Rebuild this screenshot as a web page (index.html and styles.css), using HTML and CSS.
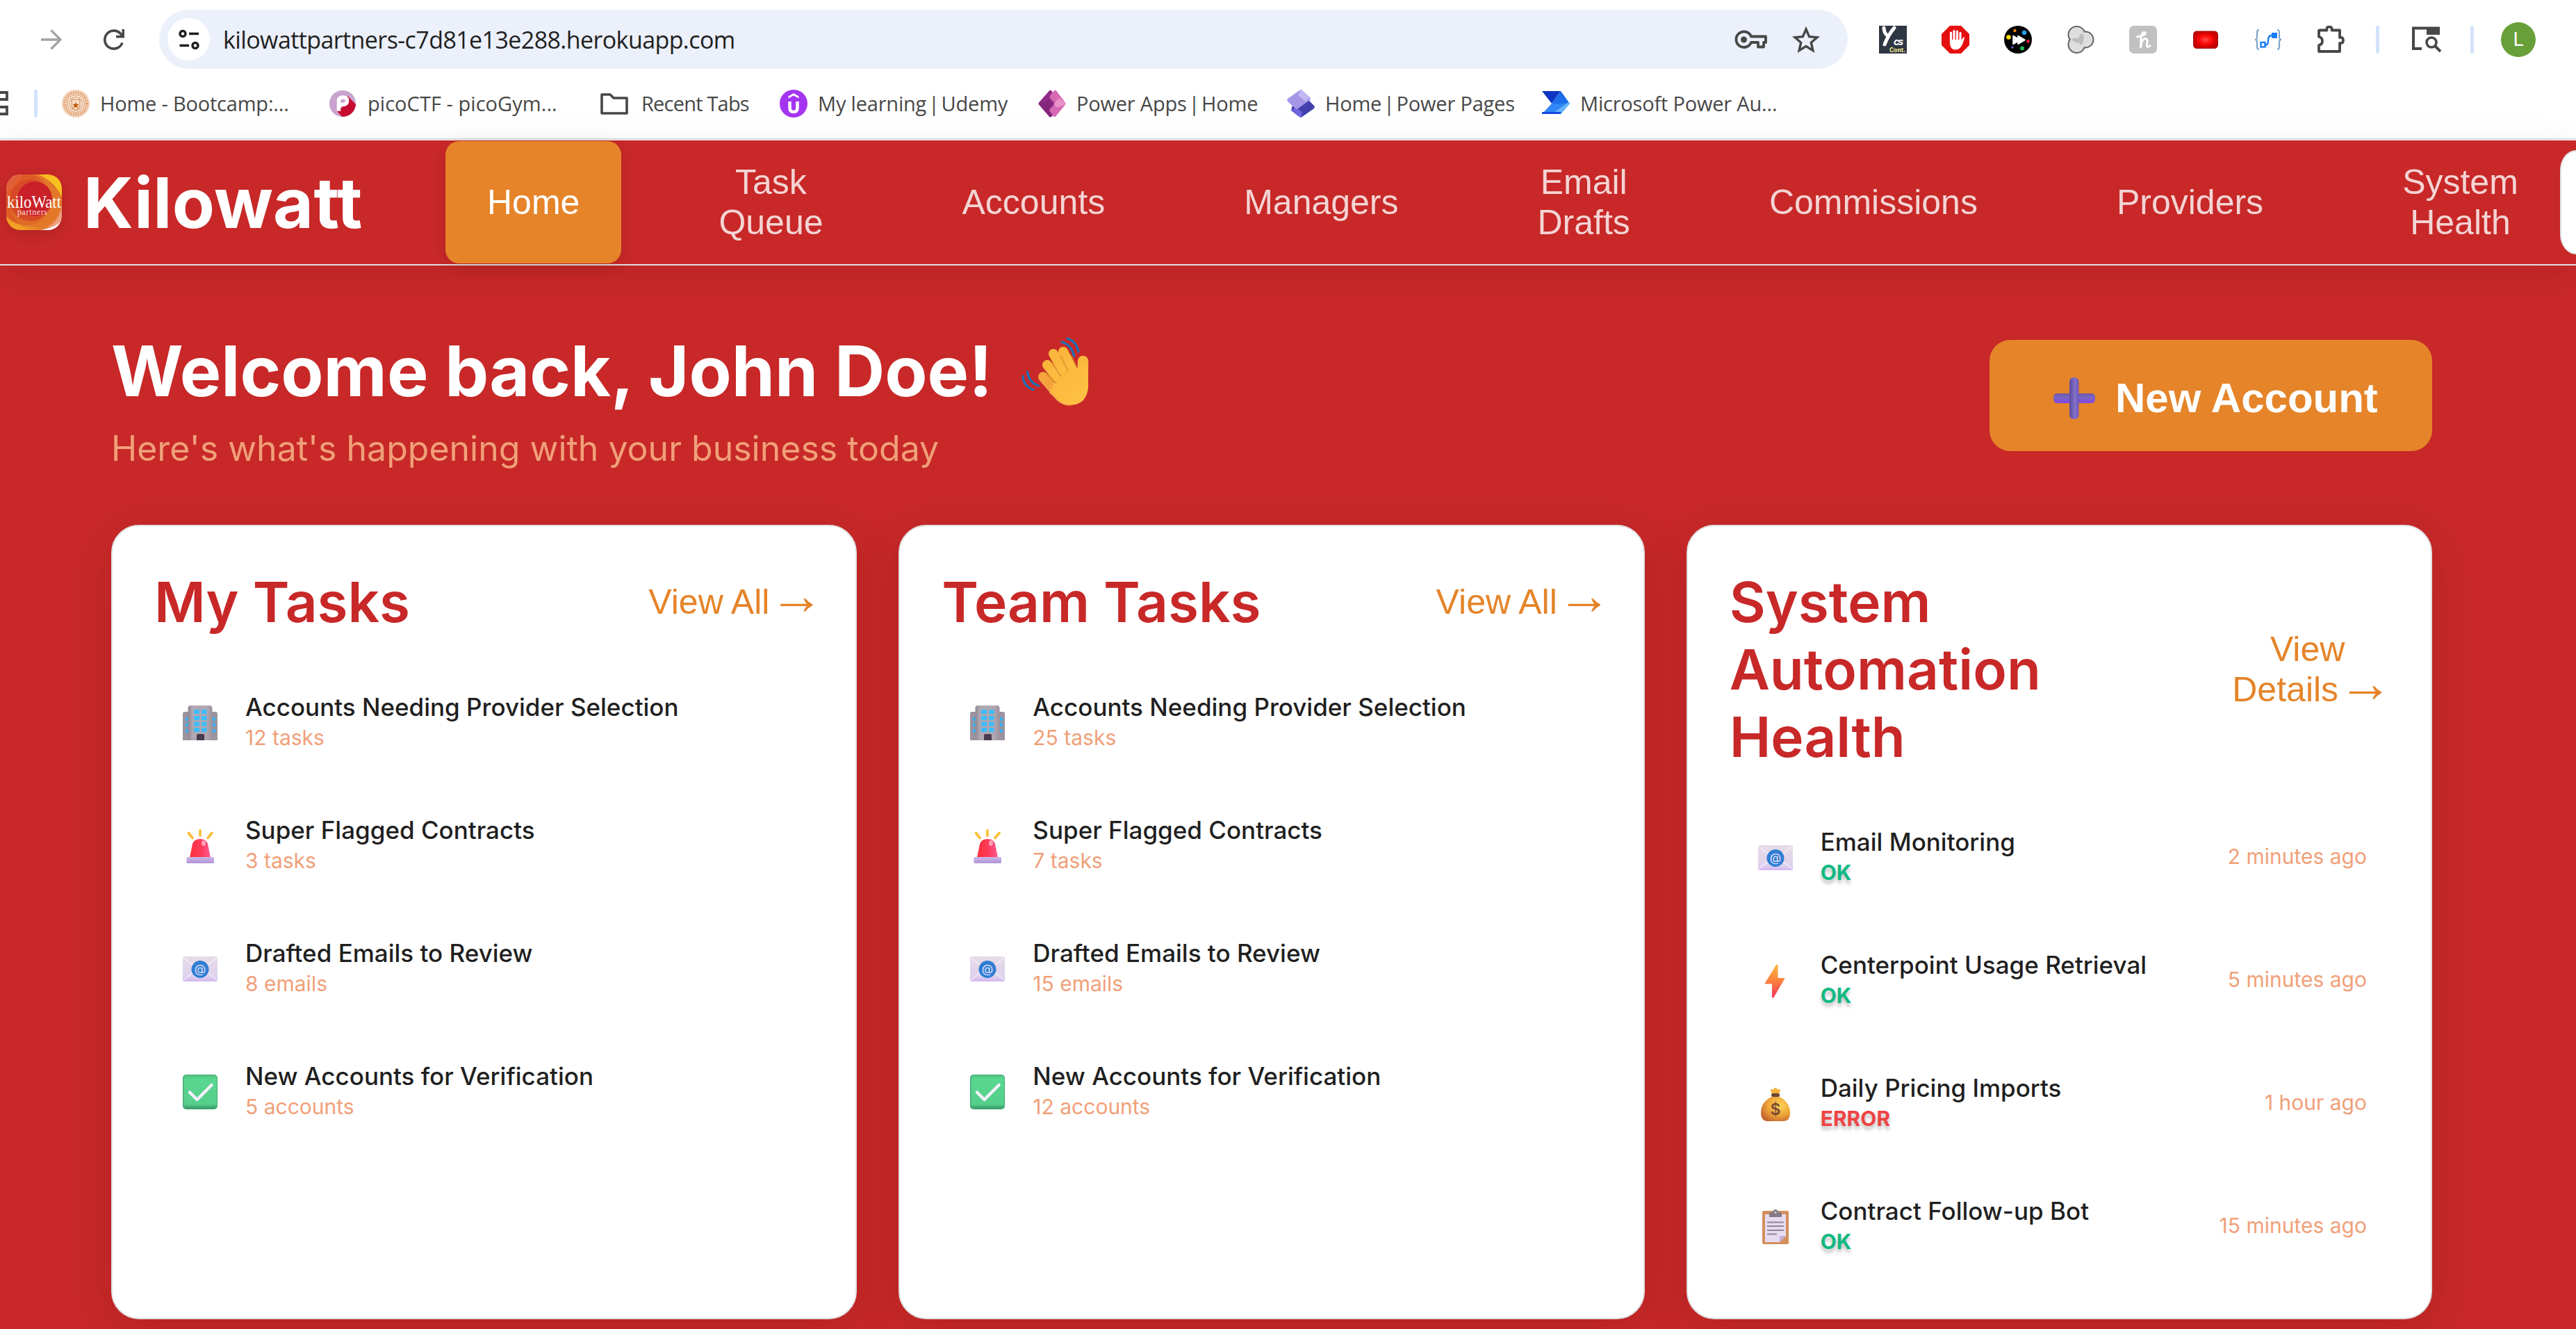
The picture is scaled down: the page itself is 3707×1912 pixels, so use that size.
FILE: index.html
```html
<!DOCTYPE html>
<html lang="en">
<head>
<meta charset="utf-8">
<title>Kilowatt</title>
<link rel="stylesheet" href="styles.css">
</head>
<body>
<svg class="sprite" width="0" height="0" aria-hidden="true">
  <defs>
    <linearGradient id="gTower" x1="0" x2="1"><stop offset="0" stop-color="#8f8793"/><stop offset=".2" stop-color="#b0a8b2"/><stop offset=".8" stop-color="#aea6b0"/><stop offset="1" stop-color="#9a919e"/></linearGradient>
    <linearGradient id="gDome" x1="0" x2="1"><stop offset="0" stop-color="#ff2f3c"/><stop offset=".55" stop-color="#fb3a5a"/><stop offset="1" stop-color="#ff5a93"/></linearGradient>
    <linearGradient id="gBase" x1="0" y1="0" x2="0" y2="1"><stop offset="0" stop-color="#c9b8e6"/><stop offset="1" stop-color="#b294d8"/></linearGradient>
    <linearGradient id="gMail" x1="0" y1="0" x2="0" y2="1"><stop offset="0" stop-color="#e6dce6"/><stop offset=".8" stop-color="#ded2ee"/><stop offset="1" stop-color="#d3b6ef"/></linearGradient>
    <linearGradient id="gCheck" x1="0" y1="0" x2="0" y2="1"><stop offset="0" stop-color="#4fc283"/><stop offset=".12" stop-color="#59d78f"/><stop offset=".88" stop-color="#55cf8b"/><stop offset="1" stop-color="#3a9a68"/></linearGradient>
    <linearGradient id="gBolt" x1="0" y1="0" x2="0" y2="1"><stop offset="0" stop-color="#ffb83d"/><stop offset=".5" stop-color="#fb8140"/><stop offset="1" stop-color="#f4345c"/></linearGradient>
    <radialGradient id="gBag" cx=".65" cy=".35" r=".75"><stop offset="0" stop-color="#ffd35a"/><stop offset=".55" stop-color="#eda637"/><stop offset="1" stop-color="#c4632f"/></radialGradient>
    <linearGradient id="gHand" x1="0" y1="0" x2="1" y2="1"><stop offset="0" stop-color="#f9b63a"/><stop offset=".5" stop-color="#fdbb3f"/><stop offset="1" stop-color="#ffc446"/></linearGradient>
    <linearGradient id="gPlusV" x1="0" x2="1"><stop offset="0" stop-color="#5b4a9e"/><stop offset=".6" stop-color="#8471c8"/><stop offset="1" stop-color="#6c56b8"/></linearGradient>
    <linearGradient id="gPlusH" x1="0" y1="0" x2="0" y2="1"><stop offset="0" stop-color="#6a5aa8"/><stop offset=".4" stop-color="#7a66c0"/><stop offset="1" stop-color="#8246e8"/></linearGradient>
    <radialGradient id="gRec"><stop offset="0" stop-color="#ff4a4a"/><stop offset=".5" stop-color="#fb0a0a"/><stop offset="1" stop-color="#c40000"/></radialGradient>
    <clipPath id="logoClip"><rect width="80" height="80" rx="20"/></clipPath>
    <clipPath id="picoClip"><circle cx="20" cy="20" r="19"/></clipPath>
  </defs>
  <symbol id="building" viewBox="0 0 50 50">
    <path d="M0 50V12q0-3 3-3h44q3 0 3 3v38z" fill="#9c94a0"/>
    <g fill="#35aef0"><rect x="4" y="17" width="4" height="5"/><rect x="4" y="25" width="4" height="5"/><rect x="4" y="34" width="4" height="5"/><rect x="43" y="17" width="4" height="5"/><rect x="43" y="25" width="4" height="5"/><rect x="43" y="34" width="4" height="5"/></g>
    <path d="M7.500 50V4q0-4 4-4h27q4 0 4 4v46z" fill="url(#gTower)"/>
    <g fill="#3dbdfc"><rect x="16" y="6" width="8" height="6"/><rect x="27" y="6" width="7.500" height="6"/><rect x="16" y="15" width="8" height="6"/><rect x="27" y="15" width="7.500" height="6"/><rect x="16" y="23.500" width="8" height="6"/><rect x="27" y="23.500" width="7.500" height="6"/><rect x="16" y="32" width="8" height="6"/><rect x="27" y="32" width="7.500" height="6"/></g>
    <path d="M20 50v-7q0-2 2-2h7q2 0 2 2v7z" fill="#493a50"/>
  </symbol>
  <symbol id="siren" viewBox="0 0 50 50">
    <path d="M8.500 6.500l5.500 7M25 3v7M42 6.500l-6 7" stroke="#fbbf3a" stroke-width="3.800" stroke-linecap="round"/>
    <path d="M10 42l4-20q2.500-7 11-7t11 7l4 20z" fill="url(#gDome)"/>
    <ellipse cx="30" cy="21" rx="3" ry="4" fill="#ffa0b8"/>
    <rect x="5.500" y="41" width="39.500" height="9" rx="1.500" fill="url(#gBase)"/>
  </symbol>
  <symbol id="mail" viewBox="0 0 50 50">
    <rect y="7" width="50" height="36" rx="2.500" fill="url(#gMail)"/>
    <path d="M1 9l18 14M49 9L31 23M1 41l15-12M49 41L34 29" stroke="#f5effa" stroke-width="1.300"/>
    <circle cx="25" cy="25.500" r="12.500" fill="#2f7ed2"/>
  </symbol>
  <symbol id="check" viewBox="0 0 50 50">
    <rect width="50" height="50" rx="5" fill="#43a873"/>
    <rect x="1.500" y="1" width="47.500" height="47.500" rx="4" fill="url(#gCheck)"/>
    <path d="M10 25.500L20.500 36 41.500 15" fill="none" stroke="#f6f1fc" stroke-width="4.500" stroke-linecap="round" stroke-linejoin="round"/>
  </symbol>
  <symbol id="bolt" viewBox="0 0 50 50">
    <path d="M26.500 2h1.500v19.500h10L22 49h-1.500V29H10z" fill="url(#gBolt)" stroke="url(#gBolt)" stroke-linejoin="round"/>
  </symbol>
  <symbol id="bag" viewBox="0 0 50 50">
    <path d="M20 11l-2.500-7 4 .5 3.500-3 3.500 3 4-.5L30 11z" fill="#f2b13a"/>
    <path d="M19 15h12q15 8 15 23 0 12-10 12H14Q4 50 4 38q0-15 15-23z" fill="url(#gBag)"/>
    <rect x="19" y="10" width="12" height="5" rx="2" fill="#6d4630"/>
  </symbol>
  <symbol id="clipboard" viewBox="0 0 50 50">
    <rect x="6" y="2" width="38" height="48" rx="2" fill="#d48f5c"/>
    <path d="M10 7h30v31l-9 9H10z" fill="#e6dcf0"/>
    <path d="M31 47v-8q0-1 1-1h8z" fill="#c3b0d8"/>
    <path d="M13 18.500h24M13 24h24M13 30h24M13 35.500h14" stroke="#8f8798" stroke-width="1.800"/>
    <path d="M16 11V6q0-2 2-2h3q1-4 4-4t4 4h3q2 0 2 2v5z" fill="#847b88"/>
    <circle cx="25" cy="4.500" r="1.500" fill="#d9d0de"/>
  </symbol>
</svg>

<div class="browser">
  <div class="toolbar">
    <svg class="nav-icon forward" viewBox="0 0 30 30"><path d="M0 15h27M14.500 1.500L28 15 14.500 28.500" fill="none" stroke="#a3a3a3" stroke-width="3.300"/></svg>
    <svg class="nav-icon reload" viewBox="0 0 30 30"><path d="M27 19.500A13 13 0 1 1 24.500 6.500L27 9" fill="none" stroke="#474747" stroke-width="3.600"/><path d="M30 0v12.500H18V9h8.500V0z" fill="#474747"/></svg>
    <div class="omnibox">
      <span class="site-info"><svg width="30" height="28" viewBox="0 0 30 28"><g fill="none" stroke="#1f1f1f" stroke-width="3.400"><circle cx="6" cy="5.500" r="4"/><path d="M15 5.500h14M1.500 22.500h13.500"/><circle cx="24" cy="22.500" r="4"/></g></svg></span>
      <span class="url">kilowattpartners-c7d81e13e288.herokuapp.com</span>
      <svg class="key" width="47" height="28" viewBox="0 0 47 28"><g fill="none" stroke="#474747" stroke-width="3.800"><path d="M24 9.500h21V18h-3v6.500h-8V18H24a11.200 11.200 0 1 1 0-8.500z" stroke-linejoin="round"/></g><circle cx="13.500" cy="14" r="4.500" fill="#474747"/></svg>
      <svg class="star" width="40" height="38" viewBox="0 0 40 38"><path d="M20 4l4.600 10.600L36 15.700l-8.700 7.600 2.600 11.300L20 28.600l-9.900 6 2.600-11.300L4 15.700l11.400-1.100z" fill="none" stroke="#474747" stroke-width="3.400"/></svg>
    </div>
    <div class="extensions">
      <svg viewBox="0 0 40 40"><rect width="40" height="40" fill="#2f3743"/><path d="M7 3q0 8 6 12M22 3q-8 9-14 24" fill="none" stroke="#fff" stroke-width="5" stroke-linecap="round"/><text x="21" y="28" font-family="Inter, sans-serif" font-style="italic" font-size="14" font-weight="700" fill="#fff" textLength="14">cs</text><text x="15" y="38" font-family="Inter, sans-serif" font-size="8.500" font-weight="700" fill="#fbf09a" textLength="23">Cont.</text></svg>
      <svg viewBox="0 0 40 40"><path d="M12 0h16l12 12v16L28 40H12L0 28V12z" fill="#e60f0f"/><path d="M13.500 25V10M18 20V7.500M22.500 20V8M27 22v-11.500" stroke="#fff" stroke-width="3.200" stroke-linecap="round"/><path d="M12 20h16v2l3-5q1.500-1.500 2 0-2 9-5 13-3 4.500-8 4.500-6 0-7.500-6z" fill="#fff"/></svg>
      <svg viewBox="0 0 40 40"><circle cx="20" cy="20" r="20"/><path d="M13 14.500l7 4v-4l10 6-10 6v-4l-7 4z" fill="#fff" stroke="#fff" stroke-width="1.500" stroke-linejoin="round"/><circle cx="15.500" cy="7" r="2.200" fill="#f57c00"/><circle cx="29" cy="10" r="3.300" fill="#1ea0f0"/><circle cx="6.500" cy="16.500" r="3.300" fill="#ffe000"/><circle cx="34.500" cy="22.500" r="2.200" fill="#ff1744"/><circle cx="12" cy="31" r="1.700" fill="#5b5bd6"/><circle cx="26" cy="32.500" r="3" fill="#1db954"/></svg>
      <svg viewBox="0 0 40 40"><g fill="#ddd" stroke="#666" stroke-width="3"><circle cx="14.500" cy="13" r="11.500"/><circle cx="14.500" cy="27" r="11.500"/><circle cx="27" cy="20" r="11"/></g><g fill="#dedede"><circle cx="14.500" cy="13" r="11"/><circle cx="14.500" cy="27" r="11"/><circle cx="27" cy="20" r="10.500"/></g><path d="M7 20q7-6 14 3-7 4-14-3zM17 20q0-7 6-9 3 5 1 11-1 4-3 6-4-3-4-8z" fill="#bdbdbd"/></svg>
      <svg viewBox="0 0 40 40"><rect width="40" height="40" rx="7" fill="#c1c1c1"/><path d="M11.500 16q10-1.500 12-4.500-1-3.500-4-1-2.500 3-2.500 8l-.5 12.500q1-10.500 6-12.500 4.500 0 3.500 5-1.500 6 .5 7 2 0 3.500-2" fill="none" stroke="#fff" stroke-width="2.900" stroke-linecap="round" stroke-linejoin="round"/></svg>
      <svg viewBox="0 0 40 40"><rect x="2.500" y="8" width="35" height="24.500" rx="4.500" fill="url(#gRec)" stroke="#a01010"/></svg>
      <svg viewBox="0 0 40 40"><path d="M7 6q-3 0-3 4v6q0 4-3 4 3 0 3 4v6q0 4 3 4M33 6q3 0 3 4v6q0 4 3 4-3 0-3 4v6q0 4-3 4" fill="none" stroke="#7fa4c8" stroke-width="2.200"/><rect x="9.500" y="24" width="6" height="6.500" fill="none" stroke="#1a7cf5" stroke-width="2.400"/><rect x="25" y="10" width="8" height="8" fill="#1a7cf5"/><path d="M16 28q4 0 4-7t5-7" fill="none" stroke="#1a7cf5" stroke-width="2.400"/></svg>
      <svg viewBox="0 0 40 40"><path d="M4 6.500h10.500q-1-5 3.500-5t3.500 5H33v10.500q5-1 5 4t-5 4V37H3V28q5-1 5-6t-5-6V7z" fill="none" stroke="#474747" stroke-width="3.800" stroke-linejoin="round"/></svg>
    </div>
    <span class="bar-sep first"></span>
    <svg class="tabsearch" width="44" height="38" viewBox="0 0 44 38"><path d="M16 32H4V2.500h36V12" fill="none" stroke="#474747" stroke-width="4"/><path d="M23 1h19v11H23z" fill="#474747"/><circle cx="30" cy="23" r="7" fill="none" stroke="#474747" stroke-width="3.600"/><path d="M35 28l8 8" stroke="#474747" stroke-width="4"/></svg>
    <span class="bar-sep second"></span>
    <span class="avatar">L</span>
  </div>

  <div class="bookmarks">
    <svg class="apps" width="14" height="38" viewBox="0 0 14 38"><path d="M0 3h10v10H0M0 24h10v10H0" fill="none" stroke="#474747" stroke-width="3.800"/></svg>
    <span class="bar-sep mark-sep"></span>
    <div class="marks">
      <div class="mark"><svg viewBox="0 0 40 40"><circle cx="20" cy="20" r="20" fill="#f3d3bb"/><circle cx="20" cy="20" r="16" fill="none" stroke="#dd9a68" stroke-width="3.500" stroke-dasharray="1.600 1.800"/><circle cx="20" cy="20" r="12.500" fill="#fcf3ec" stroke="#d98f5a"/><circle cx="20" cy="20" r="9.500" fill="none" stroke="#e6b48e" stroke-width="2"/><path d="M14 14h12v9q-1 5-6 7-5-2-6-7z" fill="#f7dcc8" stroke="#cc7a3e"/><path d="M20 18l1.500 3h3l-2.400 2.200.9 3.300-3-1.800-3 1.800.9-3.300-2.400-2.200h3z" fill="#bf5700"/></svg><span>Home - Bootcamp:...</span></div>
      <div class="mark pico"><svg viewBox="0 0 40 40"><circle cx="20" cy="20" r="19" fill="#c9a2cd"/><path d="M27 9l13 13v18H20l-8-9 8-6z" fill="#c60c30" clip-path="url(#picoClip)"/><path d="M14.500 28V16q0-5 6-5t6 5q0 5.500-7 5.500" fill="none" stroke="#fff" stroke-width="5.500" stroke-linecap="square"/></svg><span>picoCTF - picoGym...</span></div>
      <div class="mark folder"><svg viewBox="0 0 44 40"><path d="M4 7h12l5 5h19v22H4z" fill="none" stroke="#474747" stroke-width="3.600" stroke-linejoin="round"/></svg><span>Recent Tabs</span></div>
      <div class="mark"><svg viewBox="0 0 40 40"><circle cx="20" cy="20" r="20" fill="#a435f0"/><path d="M12.500 12.500V9.500L20 5l7.500 4.500v3L20 8.500z" fill="#fff"/><path d="M14.500 17v9q0 6 5.500 6t5.500-6v-9" fill="none" stroke="#fff" stroke-width="4.500"/></svg><span>My learning <i>|</i> Udemy</span></div>
      <div class="mark"><svg viewBox="0 0 40 40"><path d="M16 1.500q1.500-1.500 3 0l10 14-8 9 2 9-4 5.500q-1.500 1.500-3 0L1 21.500q-1-1.500 0-3z" fill="#8f2b84"/><path d="M22 12l-8 3 8 7-6 4 6 12-5 1L1 21z" fill="#6d1f68" opacity=".35"/><path d="M23 1.500q1.500-1.500 3 0L39 18.500q1 1.500 0 3L25 38.500q-1.500 1.500-3 0l-5-7q-1-2 0-4l6-6q1-1.500 0-3l-6-6q-1-2 0-4z" fill="#d768b4"/><path d="M30 12l9 6.500q1 1.500 0 3L28 26l-6-5z" fill="#eda0d3" opacity=".75"/></svg><span>Power Apps <i>|</i> Home</span></div>
      <div class="mark"><svg viewBox="0 0 40 40"><path d="M31 15l8 8q1.500 2 0 4L22 39q-2 1.500-4 0L6 30l2-8z" fill="#4340ae"/><path d="M6 30l8-5 8 8-2 7q-1 0-2-1z" fill="#6d62dc"/><path d="M18 1q2-1.500 4 0l11 10q1.500 2 0 4L16 27q-2 1.500-4 0L1 17q-1.500-2 0-4z" fill="#a596e8"/><path d="M20 0q1 0 2 1l11 10-6 6-11-9z" fill="#c4b8f4"/></svg><span>Home <i>|</i> Power Pages</span></div>
      <div class="mark"><svg viewBox="0 0 40 40"><path d="M0 2h27L14 20z" fill="#0c35c4"/><path d="M27 2l13 18H14z" fill="#1d6ce8"/><path d="M40 20L27 35H0l14-15z" fill="#2f86f4"/><path d="M38 18l2 2-13 15H14z" fill="#65b3fb"/><path d="M0 32h27v3H0z" fill="#1547e0"/></svg><span>Microsoft Power Au...</span></div>
    </div>
  </div>
</div>

<header class="site-header">
  <svg class="logo" width="80" height="80" viewBox="0 0 80 80">
    <g clip-path="url(#logoClip)">
      <rect width="80" height="80" fill="#e4772a"/>
      <path d="M0 0h26L0 28z" fill="#f0826e"/>
      <path d="M46 0h34v32Q70 10 46 0z" fill="#f7c020"/>
      <path d="M0 58q14 18 50 18l-6 4H0z" fill="#f0a024"/>
      <path d="M80 44v36H50q24-10 30-36z" fill="#f0a184"/>
      <path d="M80 66v14H46q24-2 34-14z" fill="#fff"/>
      <circle cx="28" cy="36" r="37" fill="#dc5226" opacity=".75"/>
      <circle cx="43" cy="44" r="37" fill="#e07a26" opacity=".5"/>
      <circle cx="35" cy="37" r="30" fill="#d84a27"/>
      <circle cx="41" cy="35" r="25" fill="#ca2029"/>
    </g>
    <text x="1" y="48" font-family="Liberation Serif, serif" font-size="25" fill="#fff" textLength="78" lengthAdjust="spacingAndGlyphs">kiloWatt</text>
    <text x="16" y="58" font-family="Liberation Serif, serif" font-size="12" fill="#f6dcd8" textLength="43">partners</text>
  </svg>
  <span class="brand">Kilowatt</span>
  <nav class="main-nav">
    <a class="active">Home</a>
    <a>Task<br>Queue</a>
    <a>Accounts</a>
    <a>Managers</a>
    <a>Email<br>Drafts</a>
    <a>Commissions</a>
    <a>Providers</a>
    <a>System<br>Health</a>
  </nav>
  <div class="search"></div>
</header>

<main class="dashboard">
  <section class="welcome">
    <div>
      <h1>Welcome back, John Doe!<svg class="wave" width="120" height="120" viewBox="0 0 120 120">
        <g stroke="url(#gHand)" stroke-width="14" stroke-linecap="round" fill="none"><path d="M40 67l24 28" stroke="#f3a43a"/><path d="M46 50l26 34"/><path d="M55 34l22 40"/><path d="M69 31l20 38"/><path d="M97.500 44.500Q98 58 96 72" stroke="#fbb83f" stroke-width="15.500"/></g>
        <path d="M49 90L62 66q14-12 26-11 6-1 12-8l5 14v22q-3 25-27 25-10 0-17-7z" fill="url(#gHand)"/>
        <path d="M34 70l28 32q9 6 17 6" fill="none" stroke="#f5a85a" stroke-width="2" opacity=".6"/>
        <path d="M45 63l14 13M53 47l13 20M65 37l11 22M80 36l9 19" stroke="#dc8c30" stroke-width="2" opacity=".7"/>
        <path d="M67 17q14 4 17.500 20M75 12q13 4 16 19M17.500 60q2 15 16 20M11 66q1 15 15 19.500" fill="none" stroke="#1872b8" stroke-width="3.200" stroke-linecap="round"/>
      </svg></h1>
      <p>Here's what's happening with your business today</p>
    </div>
    <button class="new-account"><svg width="60" height="60" viewBox="0 0 60 60"><rect x="0" y="23" width="60" height="14" rx="5" fill="url(#gPlusH)"/><rect x="23" y="0" width="13.500" height="60" rx="6" fill="url(#gPlusV)"/></svg>New Account</button>
  </section>

  <section class="cards">
    <article class="card">
      <div class="card-head"><h2>My Tasks</h2><a class="more">View All <b>→</b></a></div>
      <ul>
        <li><svg><use href="#building"/></svg><div><strong>Accounts Needing Provider Selection</strong><span>12 tasks</span></div></li>
        <li><svg><use href="#siren"/></svg><div><strong>Super Flagged Contracts</strong><span>3 tasks</span></div></li>
        <li><svg><use href="#mail"/><text class="at" x="25" y="31">@</text></svg><div><strong>Drafted Emails to Review</strong><span>8 emails</span></div></li>
        <li><svg><use href="#check"/></svg><div><strong>New Accounts for Verification</strong><span>5 accounts</span></div></li>
      </ul>
    </article>
    <article class="card">
      <div class="card-head"><h2>Team Tasks</h2><a class="more">View All <b>→</b></a></div>
      <ul>
        <li><svg><use href="#building"/></svg><div><strong>Accounts Needing Provider Selection</strong><span>25 tasks</span></div></li>
        <li><svg><use href="#siren"/></svg><div><strong>Super Flagged Contracts</strong><span>7 tasks</span></div></li>
        <li><svg><use href="#mail"/><text class="at" x="25" y="31">@</text></svg><div><strong>Drafted Emails to Review</strong><span>15 emails</span></div></li>
        <li><svg><use href="#check"/></svg><div><strong>New Accounts for Verification</strong><span>12 accounts</span></div></li>
      </ul>
    </article>
    <article class="card">
      <div class="card-head"><h2>System<br>Automation<br>Health</h2><a class="more wrap">View<br>Details <b>→</b></a></div>
      <ul>
        <li><svg><use href="#mail"/><text class="at" x="25" y="31">@</text></svg><div><strong>Email Monitoring</strong><span class="status ok">OK</span></div><time>2 minutes ago</time></li>
        <li><svg><use href="#bolt"/></svg><div><strong>Centerpoint Usage Retrieval</strong><span class="status ok">OK</span></div><time>5 minutes ago</time></li>
        <li><svg><use href="#bag"/><text class="dollar" x="25" y="41">$</text></svg><div><strong>Daily Pricing Imports</strong><span class="status error">ERROR</span></div><time>1 hour ago</time></li>
        <li><svg><use href="#clipboard"/></svg><div><strong>Contract Follow-up Bot</strong><span class="status ok">OK</span></div><time>15 minutes ago</time></li>
      </ul>
    </article>
  </section>
</main>
</body>
</html>
```
FILE: styles.css
```css
* { box-sizing: border-box; }
html, body { height: 100%; }
body {
  margin: 0;
  overflow: hidden;
  background: #c82828;
  font-family: Inter, sans-serif;
}
.sprite { position: absolute; }
svg { display: block; flex: none; }

/* Browser chrome */
.browser {
  height: 202px;
  background: #fff;
  color: #474747;
  font-family: "Open Sans", sans-serif;
}
.toolbar { display: flex; align-items: center; height: 113px; }
.nav-icon { width: 30px; height: 30px; }
.forward { margin-left: 59px; }
.reload { margin-left: 60px; }
.omnibox {
  display: flex;
  align-items: center;
  flex: none;
  width: 2430px;
  height: 85px;
  margin-left: 50px;
  padding: 0 40px 0 12px;
  border-radius: 43px;
  background: #ebf0fa;
}
.site-info {
  display: flex;
  align-items: center;
  justify-content: center;
  width: 61px;
  height: 61px;
  border-radius: 50%;
  background: #fff;
}
.url {
  flex: 1;
  margin-left: 19px;
  color: #1f1f1f;
  font-size: 34px;
  letter-spacing: -.59px;
}
.star { margin-left: 36px; }
.extensions {
  display: grid;
  grid-template-columns: repeat(8, 90px);
  justify-items: center;
  flex: none;
  margin-left: 20px;
}
.extensions svg { width: 40px; height: 40px; }
.bar-sep { flex: none; width: 5px; height: 40px; border-radius: 3px; background: #d3e3fd; }
.bar-sep.first { margin-left: 20px; }
.tabsearch { margin-left: 45px; }
.bar-sep.second { margin-left: 42px; }
.avatar {
  flex: none;
  width: 50px;
  height: 50px;
  margin-left: 39px;
  border-radius: 50%;
  background: #689f38;
  color: #fff;
  font: 28px/50px Roboto, sans-serif;
  text-align: center;
}
.bookmarks {
  display: flex;
  align-items: center;
  height: 88px;
  padding-bottom: 14px;
  border-bottom: 2px solid #dedfe0;
}
.mark-sep { margin-left: 35px; }
.marks {
  display: grid;
  grid-template-columns: 384px 389px 260px 372px 358px 367px 400px;
  margin-left: 35px;
}
.mark {
  display: flex;
  align-items: center;
  gap: 15px;
  height: 72px;
  font-size: 29px;
  letter-spacing: -.2px;
  white-space: nowrap;
}
.mark span { margin-top: -2px; }
.mark svg { width: 40px; height: 40px; }
.mark.pico { letter-spacing: .05px; }
.mark.pico span { margin-left: 1px; }
.mark.folder svg { width: 44px; }
.mark.folder { gap: 17px; letter-spacing: -.8px; }
.mark i { font-style: normal; margin: 0 -4.500px; }

/* Site header */
.site-header {
  position: relative;
  display: flex;
  align-items: center;
  height: 180px;
  padding-left: 9px;
  border-bottom: 2px solid #e0e0e0;
  background: #c82828;
  box-shadow: 0 10px 50px rgba(0, 0, 0, .08);
}
.logo { border-radius: 20px; box-shadow: 0 5px 20px rgba(0, 0, 0, .12); }
.brand {
  flex: none;
  width: 521px;
  margin-left: 30px;
  padding-left: 1px;
  color: #fff;
  font-size: 100px;
  font-weight: 700;
  line-height: 121px;
  letter-spacing: .3px;
}
.main-nav { display: flex; flex: none; align-items: center; gap: 80px; margin-left: 1px; }
.main-nav a {
  display: flex;
  align-items: center;
  height: 176px;
  padding: 0 60px;
  border-radius: 20px;
  color: rgba(255, 255, 255, .8);
  font: 50px/58px "Liberation Sans", sans-serif;
  text-align: center;
}
.main-nav .active {
  background: #e58429;
  color: #fff;
  box-shadow: 0 5px 20px rgba(0, 0, 0, .1);
}
/* The search field runs off the right edge; only its rounded start shows. */
.search {
  flex: 1;
  height: 150px;
  border: 2px solid #e0e0e0;
  border-right: 0;
  border-radius: 40px 0 0 40px / 50px 0 0 50px;
  background: #fff;
}

/* Dashboard */
.dashboard { padding: 91px 207px 0 160px; }
.welcome { display: flex; justify-content: space-between; align-items: flex-start; height: 282px; }
h1 {
  display: flex;
  margin: 0;
  color: #fff;
  font-size: 100px;
  font-weight: 700;
  line-height: 121px;
}
.wave { margin: 2px 0 0 33px; }
.welcome p { margin: 20px 0 0; color: #f0a079; font-size: 50px; line-height: 61px; }
.new-account {
  display: flex;
  align-items: center;
  gap: 29px;
  width: 637px;
  height: 160px;
  margin-top: 16px;
  padding: 7px 0 0 92px;
  border: 0;
  border-radius: 30px;
  background: #e58429;
  color: #fff;
  font: 700 60px "Liberation Sans", sans-serif;
  white-space: nowrap;
}
.cards { display: grid; grid-template-columns: repeat(3, 1fr); gap: 60px; height: 1143px; }
.card {
  padding: 60px;
  border: 2px solid #e0e0e0;
  border-radius: 40px;
  background: #fff;
  box-shadow: 0 15px 75px rgba(0, 0, 0, .1);
}
.card-head { display: flex; justify-content: space-between; align-items: center; }
h2 { margin: 0; color: #c82828; font-size: 80px; font-weight: 600; line-height: 97px; }
.more {
  color: #e58429;
  font: 50px/58px "Liberation Sans", sans-serif;
  text-align: center;
  white-space: nowrap;
}
.more.wrap { margin-right: 9px; }
.more b { margin: 0 -14px; font-size: 78px; font-weight: 400; line-height: 0; }
ul {
  display: grid;
  gap: 36px;
  margin: 53px 0 0;
  padding: 0;
  list-style: none;
}
li { display: flex; align-items: center; height: 141px; padding: 0 32px 0 30px; }
li svg { width: 50px; height: 50px; margin: 4px 28px 0 11px; }
li text { font-family: Inter, sans-serif; text-anchor: middle; }
li .at { fill: #e4e0ff; font-size: 17px; }
li .dollar { fill: #7c4a32; font-size: 23px; font-weight: 600; }
li div { display: grid; gap: 5px; margin-left: 12px; margin-right: auto; }
li strong { color: #1f1f1f; font-size: 35px; font-weight: 500; line-height: 42px; }
li span, li time { color: #f0a079; font-size: 30px; line-height: 36px; }
li .status { font-weight: 700; text-shadow: 0 5px 5px rgba(0, 0, 0, .25); }
li .ok { color: #10b981; }
li .error { color: #ef4444; }
```
